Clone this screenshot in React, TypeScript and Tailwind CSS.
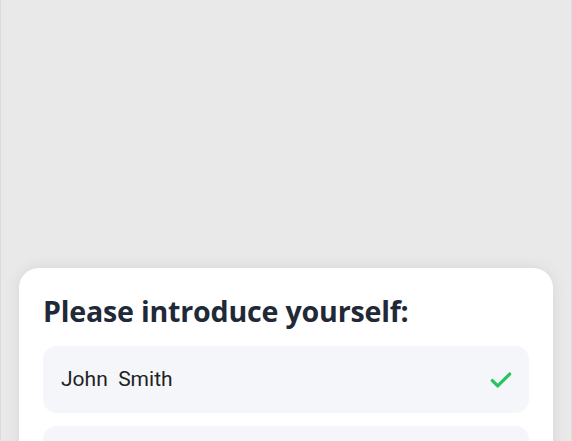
import React from 'react';

const CheckIcon: React.FC = () => (
    <svg width="26" height="26" viewBox="0 0 24 24" fill="none" stroke="#22c55e" strokeWidth="3" strokeLinecap="round" strokeLinejoin="round">
        <path d="M4 12.5l5 5L20 6.5" />
    </svg>
);

const App: React.FC = () => {
    return (
        <div className="h-[441px] w-[572px] overflow-hidden bg-[#e9e9e9] border-x border-[#dcdcdc] flex flex-col">
            <div className="h-[268px] shrink-0" />
            <div className="mx-[18px] bg-white rounded-[20px] shadow-[0_0_16px_rgba(0,0,0,0.08)] px-6 pt-[23px] pb-6 flex flex-col">
                <h1 className="text-[28.6px] leading-[40px] font-bold text-[#1f2937] font-['Open_Sans',sans-serif] tracking-[-0.2px]">
                    Please introduce yourself:
                </h1>
                <div className="mt-[15px] h-[67px] rounded-[14px] bg-[#f5f6fa] flex items-center justify-between pl-[18px] pr-[15px]">
                    <span className="text-[21px] text-[#222] font-['Roboto',sans-serif] whitespace-pre">John  Smith</span>
                    <CheckIcon />
                </div>
                <div className="mt-[13px] h-[67px] rounded-[14px] bg-[#f5f6fa]" />
            </div>
        </div>
    );
};

export default App;
